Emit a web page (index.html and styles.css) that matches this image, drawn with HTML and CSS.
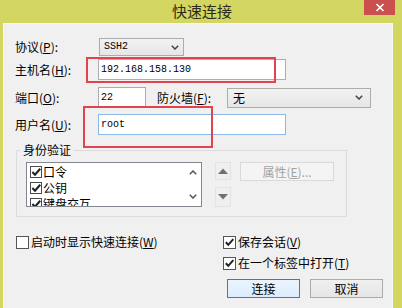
FILE: index.html
```html
<!DOCTYPE html>
<html>
<head>
<meta charset="utf-8">
<link rel="stylesheet" href="styles.css">
</head>
<body>
<div class="window">
  <div class="titlebar">
    <div class="title">快速连接</div>
    <div class="close"><svg width="10" height="9" viewBox="0 0 10 9"><path d="M1.5 1 L8.5 8 M8.5 1 L1.5 8" stroke="#fff" stroke-width="1.6" fill="none"/></svg></div>
  </div>
  <div class="frame">
    <div class="client">
      <div class="row r1">
        <span class="lbl">协议(<u>P</u>):</span>
        <div class="combo c-proto"><span class="val">SSH2</span><svg class="chev" width="8" height="5" viewBox="0 0 8 5"><path d="M0.8 0.8 L4 4 L7.2 0.8" stroke="#444" stroke-width="1.5" fill="none"/></svg></div>
      </div>
      <div class="row r2">
        <span class="lbl">主机名(<u>H</u>):</span>
        <div class="edit e-host"><span class="val">192.168.158.130</span></div>
      </div>
      <div class="row r3">
        <span class="lbl">端口(<u>O</u>):</span>
        <div class="edit e-port"><span class="val">22</span></div>
        <span class="lbl2">防火墙(<u>F</u>):</span>
        <div class="combo c-fw"><span class="cjkval">无</span><svg class="chev" width="8" height="5" viewBox="0 0 8 5"><path d="M0.8 0.8 L4 4 L7.2 0.8" stroke="#444" stroke-width="1.5" fill="none"/></svg></div>
      </div>
      <div class="row r4">
        <span class="lbl">用户名(<u>U</u>):</span>
        <div class="edit e-user focused"><span class="val">root</span></div>
      </div>

      <fieldset class="group">
        <legend>身份验证</legend>
        <div class="group-body">
          <div class="listbox">
            <div class="items">
              <div class="item"><span class="cb small checked"></span>口令</div>
              <div class="item"><span class="cb small checked"></span>公钥</div>
              <div class="item"><span class="cb small checked"></span>键盘交互</div>
            </div>
            <div class="scroll">
              <svg width="8" height="5" viewBox="0 0 8 5"><path d="M0.8 4.2 L4 1 L7.2 4.2" stroke="#555" stroke-width="1.5" fill="none"/></svg>
              <svg width="8" height="5" viewBox="0 0 8 5"><path d="M0.8 0.8 L4 4 L7.2 0.8" stroke="#555" stroke-width="1.5" fill="none"/></svg>
            </div>
          </div>
          <div class="updown">
            <div class="ubtn up"><svg width="10" height="6" viewBox="0 0 10 6"><path d="M0 6 L5 0.5 L10 6 Z" fill="#707070"/></svg></div>
            <div class="ubtn down"><svg width="10" height="6" viewBox="0 0 10 6"><path d="M0 0 L5 5.5 L10 0 Z" fill="#707070"/></svg></div>
          </div>
          <div class="btn disabled props">属性(<u>E</u>)...</div>
        </div>
      </fieldset>

      <div class="bottom">
        <div class="left-col">
          <label class="chk"><span class="cb"></span>启动时显示快速连接(<u>W</u>)</label>
        </div>
        <div class="right-col">
          <label class="chk"><span class="cb checked"></span>保存会话(<u>V</u>)</label>
          <label class="chk second"><span class="cb checked"></span>在一个标签中打开(<u>T</u>)</label>
          <div class="buttons">
            <div class="btn default">连接</div>
            <div class="btn">取消</div>
          </div>
        </div>
      </div>

      <div class="annot a1"></div>
      <div class="annot a2"></div>
    </div>
  </div>
</div>
</body>
</html>
```

FILE: styles.css
```css
* { box-sizing: border-box; }
html, body { margin: 0; padding: 0; }
body {
  width: 402px;
  height: 308px;
  overflow: hidden;
  font-family: "Noto Sans CJK SC", sans-serif;
  font-size: 12px;
  color: #000;
}
u { text-decoration: underline; text-underline-offset: 1px; }

.window {
  width: 402px;
  height: 308px;
  background: #d3d660;
  display: flex;
  flex-direction: column;
}
.titlebar {
  height: 23px;
  flex: none;
  display: grid;
  grid-template-columns: 1fr auto 1fr;
  align-items: start;
}
.title {
  grid-column: 2;
  font-size: 15px;
  line-height: 21px;
  color: #2b2b1a;
  padding-left: 2px;
}
.close {
  grid-column: 3;
  justify-self: end;
  margin-right: 7px;
  width: 31px;
  height: 15px;
  background: #c9504e;
  display: flex;
  align-items: center;
  justify-content: center;
}
.frame {
  flex: 1;
  display: flex;
  padding-left: 3px;
  padding-right: 9px;
}
.client {
  position: relative;
  flex: 1;
  background: #f0f0f0;
  border: 1px solid #f9f9f4;
  border-bottom: none;
  padding: 14px 0 0 11px;
}

.row { display: flex; align-items: center; }
.lbl { width: 83px; line-height: 16px; white-space: nowrap; }
.r1 { height: 18px; }
.r2 { height: 21px; margin-top: 3px; }
.r3 { height: 21px; margin-top: 7px; }
.r4 { height: 21px; margin-top: 6px; }

.combo {
  height: 18px;
  border: 1px solid #acacac;
  background: linear-gradient(#f2f2f2, #e6e6e6);
  display: flex;
  align-items: center;
  justify-content: space-between;
  padding: 0 4px 0 4px;
}
.c-proto { width: 85px; margin-left: 1px; }
.c-fw { width: 144px; height: 20px; padding-left: 5px; padding-right: 7px; }
.chev { flex: none; }
.val {
  font-family: "Liberation Mono", monospace;
  font-size: 10px;
  line-height: 14px;
  letter-spacing: 0;
}
.cjkval { font-size: 12px; line-height: 16px; }

.edit {
  height: 21px;
  border: 1px solid #abadb3;
  background: #fff;
  display: flex;
  align-items: center;
  padding-left: 2px;
}
.e-host, .e-user { width: 188px; }
.e-port { width: 48px; }
.focused { border-color: #8cb9e6; }
.lbl2 { width: 70px; margin-left: 11px; line-height: 16px; white-space: nowrap; }

.group {
  margin: 7px 0 0 1px;
  width: 331px;
  border: 1px solid #dcdcdc;
  padding: 4px 9px 9px 9px;
}
.group legend {
  padding: 0 3px;
  margin-left: -6px;
  line-height: 16px;
  font-size: 12px;
}
.group-body { display: flex; align-items: flex-start; }

.listbox {
  width: 176px;
  height: 45px;
  border: 1px solid #828790;
  background: #fff;
  display: flex;
  overflow: hidden;
}
.items { flex: 1; padding: 1px 0 0 3px; }
.item { display: flex; align-items: center; height: 16px; line-height: 16px; white-space: nowrap; }
.scroll {
  width: 17px;
  display: flex;
  flex-direction: column;
  align-items: center;
  justify-content: space-between;
  padding: 7px 0 7px 0;
}

.updown {
  margin-left: 13px;
  display: flex;
  flex-direction: column;
  gap: 7px;
}
.ubtn {
  width: 16px;
  border: 1px solid #e3e3e3;
  background: #efefef;
  display: flex;
  align-items: center;
  justify-content: center;
}
.ubtn.up { height: 18px; }
.ubtn.down { height: 20px; }

.btn {
  width: 73px;
  height: 19px;
  border: 1px solid #acacac;
  background: linear-gradient(#f0f0f0, #e5e5e5);
  display: flex;
  align-items: center;
  justify-content: center;
  line-height: 16px;
}
.btn.default {
  border-color: #3c7fb1;
  background: linear-gradient(#ebf4fc, #dcecfc);
}
.btn.disabled {
  color: #a3a3a3;
  border-color: #d9d9d9;
  background: #f4f4f4;
}
.props { width: 94px; margin-left: 9px; }

.cb {
  width: 13px;
  height: 13px;
  border: 1px solid #555;
  background: #fff;
  margin-right: 2px;
  flex: none;
  display: inline-block;
}
.cb.small { width: 12px; height: 12px; margin-right: 1px; border-color: #4a4a4a; }
.cb.checked {
  background: #fff url("data:image/svg+xml;utf8,<svg xmlns='http://www.w3.org/2000/svg' width='11' height='11' viewBox='0 0 11 11'><path d='M1.8 5.2 L4.3 7.8 L9.3 2.2' stroke='%23222' stroke-width='2' fill='none'/></svg>") center/11px 11px no-repeat;
}

.bottom { display: flex; margin-top: 17px; }
.left-col { width: 208px; padding-left: 1px; }
.right-col { flex: 1; display: flex; flex-direction: column; }
.chk { display: flex; align-items: center; height: 16px; line-height: 16px; white-space: nowrap; }
.chk.second { margin-top: 5px; }
.buttons { display: flex; gap: 10px; margin-top: 8px; margin-left: 4px; }

.annot {
  position: absolute;
  border: 2px solid #e2434f;
  pointer-events: none;
}
.a1 { left: 82px; top: 33px; width: 190px; height: 26px; }
.a2 { left: 79px; top: 82px; width: 130px; height: 42px; }
```
